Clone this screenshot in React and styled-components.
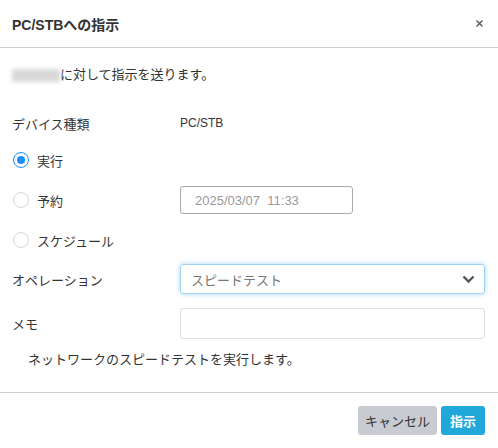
import React from 'react';
import styled, { createGlobalStyle } from 'styled-components';

const GlobalStyle = createGlobalStyle`
  html, body {
    margin: 0;
    padding: 0;
    background: #fff;
  }
  body {
    font-family: "Liberation Sans", "Noto Sans CJK JP", sans-serif;
    font-size: 13px;
    color: #333;
  }
`;

const Dialog = styled.div`
  width: 498px;
  height: 448px;
  display: flex;
  flex-direction: column;
  background: #fff;
  box-sizing: border-box;
`;

const Header = styled.div`
  height: 47px;
  border-bottom: 1px solid #c9cdd1;
  display: flex;
  align-items: center;
  justify-content: space-between;
  padding: 0 14px 0 12px;
`;

const Title = styled.h4`
  margin: 0;
  font-size: 14px;
  font-weight: bold;
  color: #333;
`;

const Close = styled.button`
  border: 0;
  background: none;
  padding: 0;
  width: 10px;
  height: 10px;
  display: flex;
  align-items: center;
  justify-content: center;
  cursor: pointer;
`;

const Body = styled.div`
  flex: 1;
  padding: 17px 13px 22px 12px;
  border-bottom: 1px solid #c9cdd1;
`;

const Intro = styled.p`
  margin: 0;
  line-height: 20px;
  display: flex;
  align-items: center;
`;

const Blurred = styled.span`
  display: inline-block;
  width: 48px;
  height: 13px;
  background: #d8d8d8;
  filter: blur(2px);
`;

const Row = styled.div`
  display: grid;
  grid-template-columns: 168px 1fr;
  align-items: center;
  height: ${(p) => p.$h || 30}px;
  margin-top: ${(p) => p.$mt || 0}px;
`;

const Value = styled.span`
  font-size: 12px;
`;

const RadioLabel = styled.label`
  display: flex;
  align-items: center;
  gap: 8px;
  margin-left: 1px;
`;

const RadioDot = styled.span`
  width: 16px;
  height: 16px;
  border-radius: 50%;
  box-sizing: border-box;
  border: 1px solid ${(p) => (p.$on ? '#1e8fff' : '#d4d4d4')};
  display: flex;
  align-items: center;
  justify-content: center;
  &::after {
    content: '';
    width: 8px;
    height: 8px;
    border-radius: 50%;
    background: ${(p) => (p.$on ? '#1e8fff' : 'transparent')};
  }
`;

const DateBox = styled.div`
  width: 173px;
  height: 28px;
  box-sizing: border-box;
  border: 1px solid #aaa;
  border-radius: 3px;
  color: #999;
  font-size: 13px;
  display: flex;
  align-items: center;
  padding-left: 14px;
  white-space: pre;
`;

const Select = styled.div`
  height: 30px;
  box-sizing: border-box;
  border: 1px solid #9fd2f1;
  border-radius: 3px;
  box-shadow: 0 0 5px rgba(102, 180, 233, 0.55);
  display: flex;
  align-items: center;
  justify-content: space-between;
  padding: 0 9px 0 10px;
  color: #777;
`;

const TextInput = styled.div`
  height: 31px;
  box-sizing: border-box;
  border: 1px solid #ddd;
  border-radius: 3px;
`;

const Note = styled.p`
  margin: 11px 0 0 16px;
  line-height: 20px;
`;

const Footer = styled.div`
  height: 55px;
  display: flex;
  justify-content: flex-end;
  align-items: flex-start;
  gap: 4px;
  padding: 13px 13px 0 0;
  box-sizing: border-box;
`;

const Button = styled.button`
  height: 29px;
  border: 0;
  border-radius: 3px;
  padding: 0 ${(p) => (p.$primary ? 9 : 7)}px;
  font-family: inherit;
  font-size: 13px;
  font-weight: ${(p) => (p.$primary ? 'bold' : 'normal')};
  background: ${(p) => (p.$primary ? '#20a8da' : '#c8ccd2')};
  color: ${(p) => (p.$primary ? '#fff' : '#333')};
  cursor: pointer;
`;

const Radio = ({ on, children }) => (
  <RadioLabel>
    <RadioDot $on={on} />
    {children}
  </RadioLabel>
);

export default function App() {
  return (
    <>
      <GlobalStyle />
      <Dialog>
        <Header>
          <Title>PC/STBへの指示</Title>
          <Close aria-label="close">
            <svg width="7" height="7" viewBox="0 0 7 7">
              <path d="M0.5 0.5 L6.5 6.5 M6.5 0.5 L0.5 6.5" stroke="#555" strokeWidth="1.4" />
            </svg>
          </Close>
        </Header>
        <Body>
          <Intro>
            <Blurred />
            に対して指示を送ります。
          </Intro>
          <Row $mt={23}>
            <span>デバイス種類</span>
            <Value>PC/STB</Value>
          </Row>
          <Row $mt={7}>
            <Radio on>実行</Radio>
          </Row>
          <Row $mt={10}>
            <Radio>予約</Radio>
            <DateBox>2025/03/07  11:33</DateBox>
          </Row>
          <Row $mt={10}>
            <Radio>スケジュール</Radio>
          </Row>
          <Row $mt={9}>
            <span>オペレーション</span>
            <Select>
              スピードテスト
              <svg width="13" height="9" viewBox="0 0 13 9">
                <path d="M1.5 1.5 L6.5 6.5 L11.5 1.5" fill="none" stroke="#555" strokeWidth="2.4" />
              </svg>
            </Select>
          </Row>
          <Row $mt={14} $h={31}>
            <span>メモ</span>
            <TextInput />
          </Row>
          <Note>ネットワークのスピードテストを実行します。</Note>
        </Body>
        <Footer>
          <Button>キャンセル</Button>
          <Button $primary>指示</Button>
        </Footer>
      </Dialog>
    </>
  );
}
